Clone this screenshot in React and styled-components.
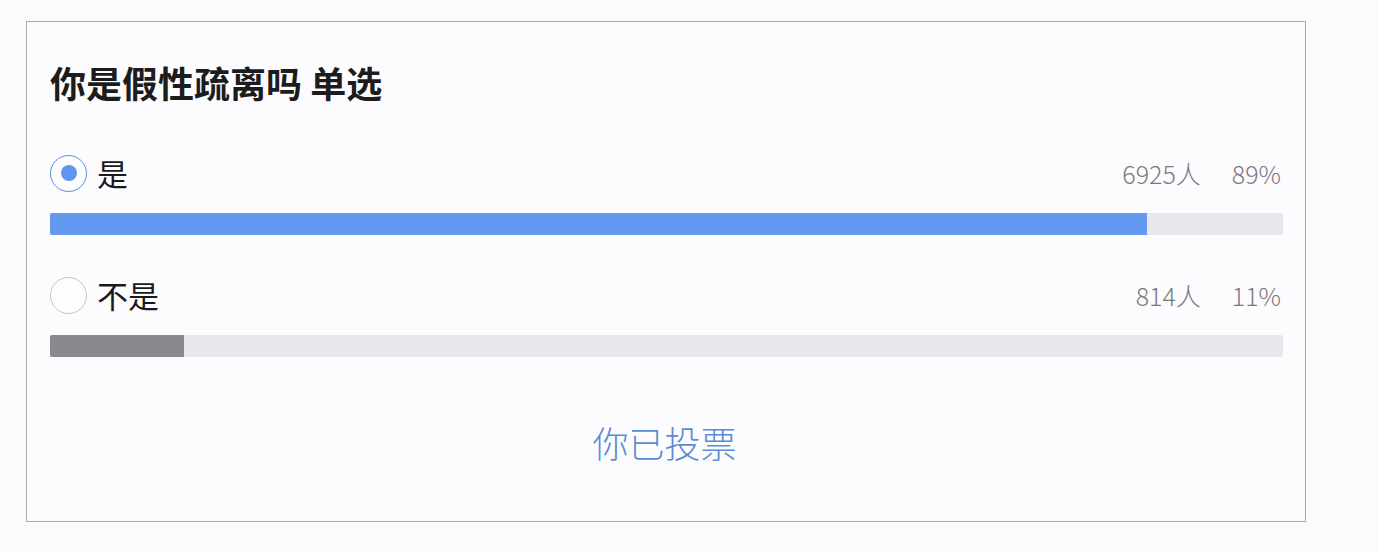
import React from "react";
import styled, { createGlobalStyle } from "styled-components";

const Global = createGlobalStyle`
  html, body { margin: 0; padding: 0; background: #fbfbfd; }
  body { font-family: "Noto Sans CJK SC", "Noto Sans", sans-serif; }
`;

const Page = styled.div`
  padding: 21px 0 0 26px;
  height: 531px;
  box-sizing: border-box;
`;

const Card = styled.section`
  box-sizing: border-box;
  width: 1280px;
  height: 501px;
  border: 1px solid #ababab;
  background: #fcfcfe;
  padding: 39px 22px 0 23px;
  display: flex;
  flex-direction: column;
`;

const Title = styled.h2`
  margin: 0;
  font-size: 36px;
  line-height: 43px;
  font-weight: 700;
  color: #1c1c1c;
  height: 43px;
`;

const Options = styled.div`
  margin-top: 49px;
  display: flex;
  flex-direction: column;
  gap: 40px;
`;

const Option = styled.div`
  display: flex;
  flex-direction: column;
  gap: 20px;
`;

const Row = styled.div`
  display: flex;
  align-items: center;
  height: 40px;
`;

const Radio = styled.span`
  box-sizing: border-box;
  width: 37px;
  height: 37px;
  border-radius: 50%;
  border: 1.5px solid ${(p) => (p.$checked ? "#5d8fdc" : "#c6c6c9")};
  background: #fdfdff;
  display: flex;
  align-items: center;
  justify-content: center;
  flex: none;
  &::after {
    content: "";
    display: ${(p) => (p.$checked ? "block" : "none")};
    width: 16px;
    height: 16px;
    border-radius: 50%;
    background: #5e96f1;
  }
`;

const Label = styled.span`
  margin-left: 10px;
  font-size: 31px;
  line-height: 40px;
  color: #1a1a1a;
  font-weight: 400;
`;

const Stats = styled.div`
  margin-left: auto;
  margin-right: 2px;
  display: flex;
  gap: 31px;
  font-size: 25px;
  line-height: 40px;
  color: #7a7a7e;
  font-weight: 300;
`;

const Track = styled.div`
  height: 22px;
  background: #e7e8ee;
  border-radius: 2px;
  overflow: hidden;
`;

const Fill = styled.div`
  height: 100%;
  background: ${(p) => (p.$active ? "#6399ef" : "#888a90")};
`;

const Voted = styled.div`
  margin-top: 64px;
  margin-right: 4px;
  text-align: center;
  font-size: 36px;
  line-height: 43px;
  color: #5b8bd6;
  font-weight: 300;
`;

const options = [
  { label: "是", count: "6925人", pct: 89, checked: true, width: 88.96 },
  { label: "不是", count: "814人", pct: 11, checked: false, width: 10.9 },
];

export default function App() {
  return (
    <>
      <Global />
      <Page>
        <Card>
          <Title>你是假性疏离吗 单选</Title>
          <Options>
            {options.map((o) => (
              <Option key={o.label}>
                <Row>
                  <Radio $checked={o.checked} />
                  <Label>{o.label}</Label>
                  <Stats>
                    <span>{o.count}</span>
                    <span>{o.pct}%</span>
                  </Stats>
                </Row>
                <Track>
                  <Fill $active={o.checked} style={{ width: `${o.width}%` }} />
                </Track>
              </Option>
            ))}
          </Options>
          <Voted>你已投票</Voted>
        </Card>
      </Page>
    </>
  );
}
